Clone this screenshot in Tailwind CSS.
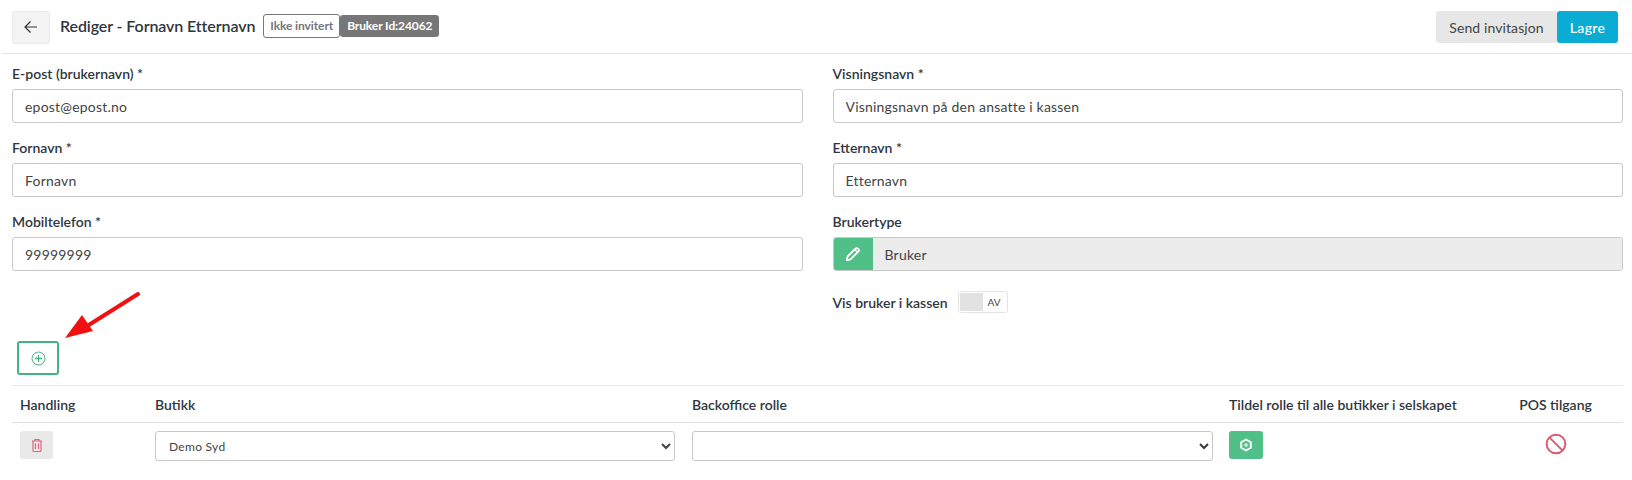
<!DOCTYPE html>
<html lang="no">
<head>
<meta charset="utf-8">
<title>Rediger bruker</title>
<script src="https://cdn.jsdelivr.net/npm/@tailwindcss/browser@4"></script>
</head>
<body class="bg-white font-['Lato',sans-serif] text-[#343a40] h-[480px] overflow-hidden">
<div class="relative">
    <!-- Header -->
    <div class="flex items-center justify-between h-[54px] ml-[2px] pl-[10px] pr-[14px] pt-px border-b border-[#e4e4e4]">
        <div class="flex items-center">
            <button class="w-[38px] h-[33px] flex items-center justify-center bg-[#f3f3f3] border border-[#e9e9e9] rounded-[3px]">
                <svg class="w-[14px] h-[14px] text-[#333]" fill="none" stroke="currentColor" viewBox="0 0 14 14">
                    <path stroke-width="1.2" d="M13 7H1.5M6.5 1.5L1 7l5.500 5.500"></path>
                </svg>
            </button>
            <h1 class="ml-[10px] mb-[3px] text-[16px] font-semibold tracking-[-0.1px] text-[#2f3640]">Rediger - Fornavn Etternavn</h1>
            <span class="ml-[8px] mb-[2px] h-[24px] px-[6px] flex items-center border border-[#777] rounded-[3px] text-[12px] font-bold tracking-[-0.1px] text-[#777]">Ikke invitert</span>
            <span class="mb-[2px] h-[22px] px-[7px] flex items-center bg-[#777] rounded-[3px] text-[12px] font-bold tracking-[-0.1px] text-white">Bruker Id:24062</span>
        </div>
        <div class="flex items-center">
            <button class="h-[32px] w-[121px] bg-[#e7e7e7] rounded-l-[3px] text-[14px] text-[#444] tracking-[0.1px]">Send invitasjon</button>
            <button class="h-[32px] w-[61px] bg-[#0bacd3] rounded-[3px] text-[14px] font-medium text-white tracking-[0.3px]">Lagre</button>
        </div>
    </div>

    <!-- Form -->
    <div class="grid grid-cols-2 gap-x-[30px] pl-[12px] pr-[9px] pt-[9px]">
        <div>
            <label class="block h-[26px] text-[14px] font-semibold text-[#2f3640]">E-post (brukernavn) *</label>
            <input class="block w-full h-[34px] px-[12px] bg-white border border-[#c8c8c8] rounded-[3px] text-[14px] tracking-[0.2px] text-[#444]" value="epost@epost.no">
        </div>
        <div>
            <label class="block h-[26px] text-[14px] font-semibold text-[#2f3640]">Visningsnavn *</label>
            <input class="block w-full h-[34px] px-[12px] bg-white border border-[#c8c8c8] rounded-[3px] text-[14px] tracking-[0.2px] text-[#444]" value="Visningsnavn på den ansatte i kassen">
        </div>
        <div class="mt-[14px]">
            <label class="block h-[26px] text-[14px] font-semibold text-[#2f3640]">Fornavn *</label>
            <input class="block w-full h-[34px] px-[12px] bg-white border border-[#c8c8c8] rounded-[3px] text-[14px] tracking-[0.2px] text-[#444]" value="Fornavn">
        </div>
        <div class="mt-[14px]">
            <label class="block h-[26px] text-[14px] font-semibold text-[#2f3640]">Etternavn *</label>
            <input class="block w-full h-[34px] px-[12px] bg-white border border-[#c8c8c8] rounded-[3px] text-[14px] tracking-[0.2px] text-[#444]" value="Etternavn">
        </div>
        <div class="mt-[14px]">
            <label class="block h-[26px] text-[14px] font-semibold text-[#2f3640]">Mobiltelefon *</label>
            <input class="block w-full h-[34px] px-[12px] bg-white border border-[#c8c8c8] rounded-[3px] text-[14px] tracking-[0.2px] text-[#444]" value="99999999">
        </div>
        <div class="mt-[14px]">
            <label class="block h-[26px] text-[14px] font-semibold text-[#2f3640]">Brukertype</label>
            <div class="flex h-[34px] border border-[#c8c8c8] rounded-[3px] overflow-hidden">
                <span class="w-[39px] flex items-center justify-center bg-[#50bf88]">
                    <svg class="w-[16px] h-[16px] text-white" fill="none" stroke="currentColor" viewBox="0 0 14 14">
                        <path stroke-width="1.6" stroke-linejoin="round" d="M1.500 12.500l.8-3.300 7-7a1.300 1.300 0 0 1 1.900 0l.6.6a1.300 1.300 0 0 1 0 1.900l-7 7z"></path>
                        <path stroke-width="1.200" d="M8.500 3l2.500 2.500"></path>
                    </svg>
                </span>
                <span class="flex-1 flex items-center pl-[12px] bg-[#ececec] text-[14px] tracking-[0.2px] text-[#444]">Bruker</span>
            </div>
            <div class="flex items-center mt-[20px]">
                <span class="text-[14px] font-semibold text-[#2f3640]">Vis bruker i kassen</span>
                <span class="ml-[10px] w-[50px] h-[22px] p-[1px] flex items-center border border-[#e4e4e4] rounded-[3px]">
                    <span class="w-[23px] h-[18px] bg-[#e2e2e2]"></span>
                    <span class="flex-1 text-center text-[10px] text-[#444]">AV</span>
                </span>
            </div>
        </div>
    </div>

    <!-- Add row -->
    <div class="pl-[17px] mt-[28px]">
        <button class="w-[42px] h-[34px] flex items-center justify-center border-2 border-[#44b581] rounded-[3px]">
            <svg class="w-[15px] h-[15px] text-[#44b581]" fill="none" stroke="currentColor" viewBox="0 0 15 15">
                <circle cx="7.500" cy="7.500" r="6.500" stroke-width="1"></circle>
                <path stroke-width="1.300" d="M7.500 4v7M4 7.500h7"></path>
            </svg>
        </button>
    </div>

    <!-- Store roles -->
    <div class="mt-[10px] ml-[12px] mr-[9px] border-t border-[#e9e9e9]">
        <div class="grid grid-cols-[143px_537px_537px_289px_1fr] h-[37px] items-center border-b border-[#e0e0e0] text-[14px] font-semibold text-[#2f3640]">
            <span class="pl-[8px]">Handling</span>
            <span>Butikk</span>
            <span>Backoffice rolle</span>
            <span>Tildel rolle til alle butikker i selskapet</span>
            <span class="text-center pr-[30px]">POS tilgang</span>
        </div>
        <div class="grid grid-cols-[143px_537px_537px_289px_1fr] items-start pt-[8px]">
            <div class="pl-[8px]">
                <button class="w-[33px] h-[28px] flex items-center justify-center bg-[#e9e9e9] rounded-[3px]">
                    <svg class="w-[12px] h-[14px] text-[#e2657c]" fill="none" stroke="currentColor" viewBox="0 0 12 14">
                        <path stroke-width="1.200" d="M1 3h10M4 3V1.500h4V3M2 3v9.500a1 1 0 0 0 1 1h6a1 1 0 0 0 1-1V3M4.500 5.500v5.500M7.500 5.500v5.500"></path>
                    </svg>
                </button>
            </div>
            <div class="pr-[17px]">
                <select class="block w-full h-[30px] pl-[9px] pr-[3px] bg-white border border-[#c8c8c8] rounded-[3px] text-[12px] tracking-[0.3px] text-[#444]">
                    <option>Demo Syd</option>
                </select>
            </div>
            <div class="pr-[16px]">
                <select class="block w-full h-[30px] pl-[9px] pr-[3px] bg-white border border-[#c8c8c8] rounded-[3px] text-[12px]">
                    <option></option>
                </select>
            </div>
            <div>
                <button class="w-[34px] h-[28px] flex items-center justify-center bg-[#50bf88] rounded-[3px]">
                    <svg class="w-[14px] h-[14px] text-white" fill="none" stroke="currentColor" viewBox="0 0 14 14">
                        <path stroke-width="2" stroke-linejoin="round" d="M7 1.500l4.800 2.750v5.500L7 12.500 2.200 9.750v-5.500z"></path>
                        <circle cx="7" cy="7" r="1.300" stroke-width="1"></circle>
                    </svg>
                </button>
            </div>
            <div class="flex justify-center pt-[2px] pr-[30px]">
                <svg class="w-[22px] h-[22px] text-[#dc5a6e]" fill="none" stroke="currentColor" viewBox="0 0 20 20">
                    <circle cx="10" cy="10" r="8.500" stroke-width="1.800"></circle>
                    <path stroke-width="1.800" d="M4 4l12 12"></path>
                </svg>
            </div>
        </div>
    </div>

    <!-- Annotation arrow -->
    <svg class="absolute left-[60px] top-[288px] w-[85px] h-[55px]" viewBox="0 0 85 55">
        <path fill="none" stroke="#f01010" stroke-width="4" stroke-linecap="round" d="M78 6L24 40"></path>
        <path fill="#f01010" d="M5 50L22 27l11 16z"></path>
    </svg>
</div>
</body>
</html>
